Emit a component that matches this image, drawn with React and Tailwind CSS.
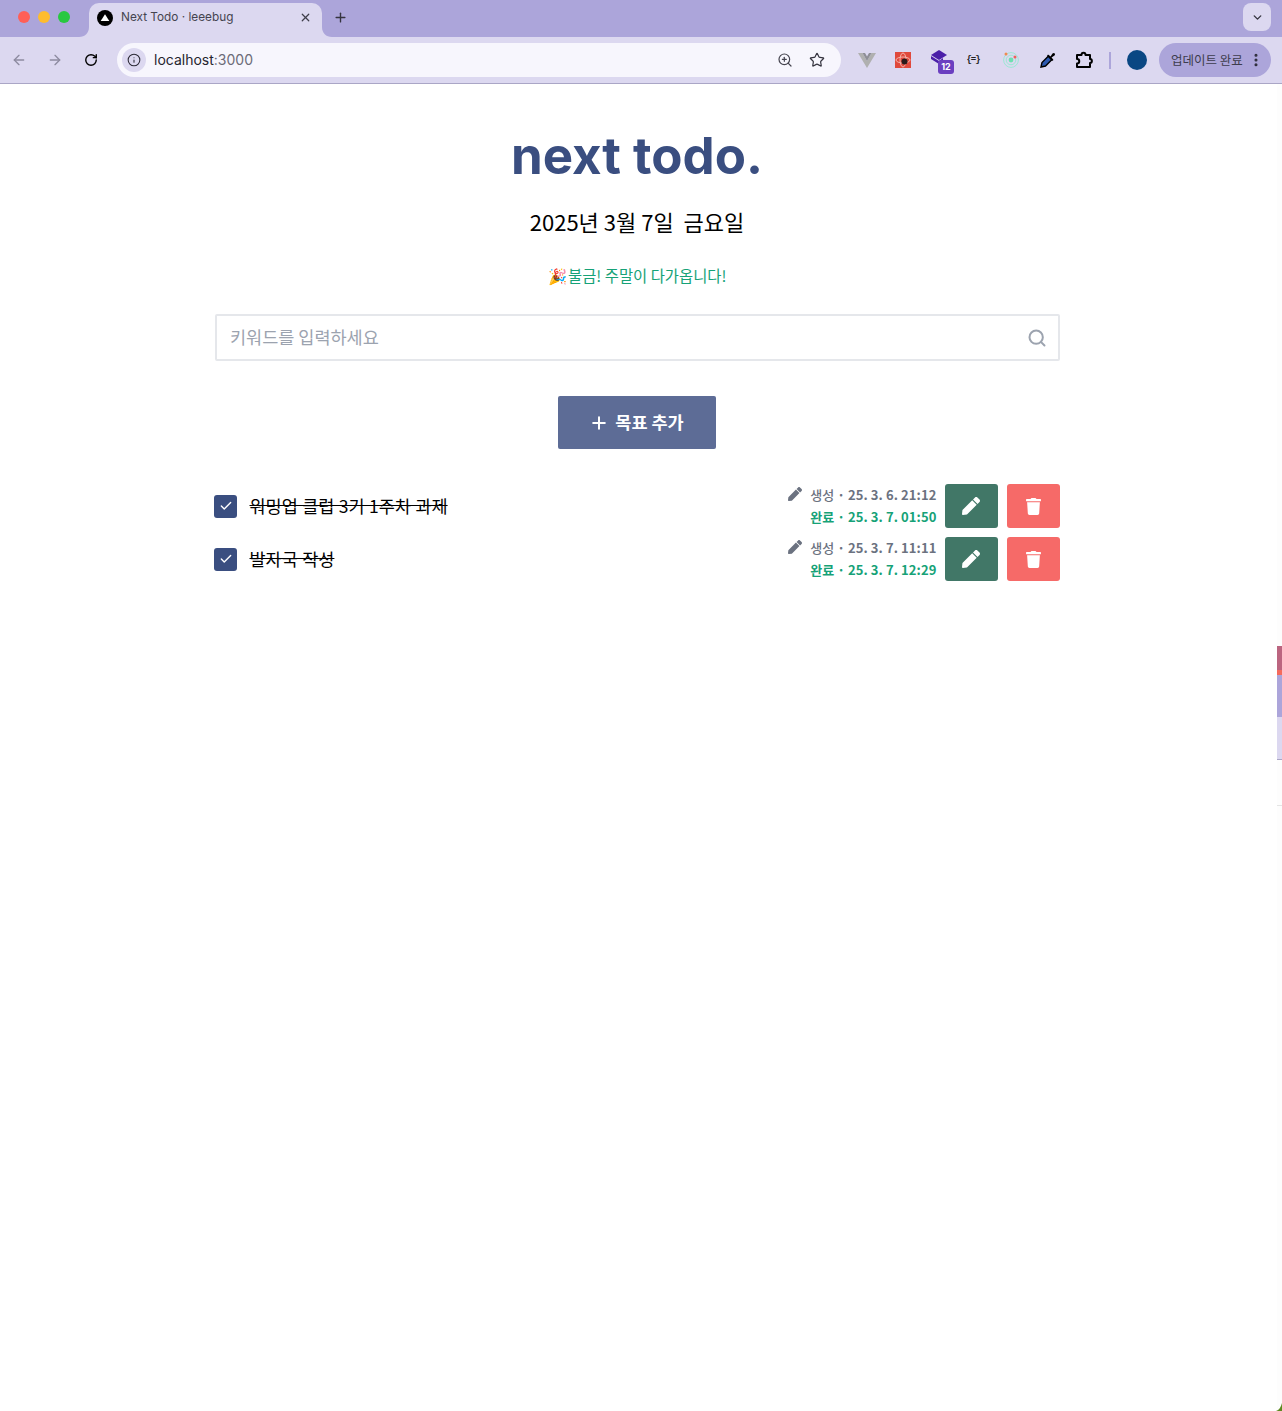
import React from "react";
import { FaPen, FaTrash } from "react-icons/fa";
import { Search, Plus, ArrowLeft, ArrowRight, RotateCw, Info, ZoomIn, Star, X, ChevronDown, Check, EllipsisVertical } from "lucide-react";

const KR = "font-['Noto_Sans_CJK_KR','Noto_Sans',sans-serif]";

function Tab() {
  return (
    <div className="relative ml-[19px] flex h-[34px] w-[233px] items-center rounded-t-[10px] bg-[#dcd8f0] pb-[5px] pl-[8px] pr-[10px]">
      <svg className="absolute bottom-0 left-[-10px]" width="10" height="10" viewBox="0 0 10 10"><path d="M10 0V10H0C6 10 10 6 10 0Z" fill="#dcd8f0" /></svg>
      <svg className="absolute bottom-0 right-[-10px]" width="10" height="10" viewBox="0 0 10 10"><path d="M0 0V10H10C4 10 0 6 0 0Z" fill="#dcd8f0" /></svg>
      <svg width="16" height="16" viewBox="0 0 16 16" className="shrink-0"><circle cx="8" cy="8" r="8" fill="#000" /><path d="M8 4.2L12.3 11H3.7Z" fill="#fff" /></svg>
      <span className="ml-[8px] flex-1 font-['Inter',sans-serif] text-[11.8px] text-[#45444f]">Next Todo · leeebug</span>
      <X size={13} strokeWidth={2.2} className="text-[#3f3e4a]" />
    </div>
  );
}

function Extensions() {
  return (
    <div className="flex items-center">
      <svg width="18" height="16" viewBox="0 0 18 16" className="ml-[17px]"><path d="M0 1H4.5L9 9L13.5 1H18L9 16Z" fill="#b0b0b0" /><path d="M4.5 1H7L9 4.5L11 1H13.5L9 9Z" fill="#8e8e96" /></svg>
      <svg width="16" height="16" viewBox="0 0 16 16" className="ml-[19px]"><rect width="16" height="16" fill="#e0493c" /><ellipse cx="8" cy="8" rx="7" ry="3" fill="none" stroke="#f8c8c0" strokeWidth=".8" /><ellipse cx="8" cy="8" rx="3" ry="7" fill="none" stroke="#f8c8c0" strokeWidth=".8" /><circle cx="9.5" cy="9.5" r="3" fill="#2a1a1a" /></svg>
      <div className="relative ml-[20px] h-[22px] w-[22px]">
        <svg width="16" height="14" viewBox="0 0 16 14" className="absolute left-0 top-[1px]"><path d="M8 0L16 5L8 10L0 5Z" fill="#4a1fa8" /><path d="M0 6V9L8 14L12 11V8L8 11Z" fill="#4a1fa8" /></svg>
        <span className="absolute bottom-[-3px] right-[-1px] flex h-[14px] w-[16px] items-center justify-center rounded-[3px] bg-[#6b3fc0] font-['Inter',sans-serif] text-[9px] font-bold text-white">12</span>
      </div>
      <span className="ml-[12px] mt-[2px] w-[16px] text-center font-['Liberation_Mono',monospace] text-[9px] font-bold tracking-[-1px] text-[#222]">{"{=}"}</span>
      <svg width="16" height="16" viewBox="0 0 16 16" className="ml-[22px]"><circle cx="8" cy="8" r="7.4" fill="none" stroke="#9be8d4" /><circle cx="8" cy="8" r="4.8" fill="none" stroke="#9be8d4" /><circle cx="8" cy="8" r="2.4" fill="#6ee0b0" /><circle cx="3" cy="2" r="1.5" fill="#f08a50" /><circle cx="12" cy="5" r="1.5" fill="#f0605a" /></svg>
      <svg width="18" height="18" viewBox="0 0 18 18" className="ml-[20px]"><path d="M2 16L3 11.5L9.5 5L13 8.5L6.5 15Z" fill="#2d5ab0" stroke="#000" strokeWidth="1.4" /><path d="M9 3.5L11.5 5.5L13.5 2.5C15 1 17 3 15.5 4.5L12.5 6.5L14.5 9L13 10L8 5Z" fill="#000" /></svg>
      <svg width="18" height="18" viewBox="0 0 18 18" className="ml-[18px]" fill="none" stroke="#000" strokeWidth="2" strokeLinejoin="round"><path d="M2 4H6.5C6.5 1 10.5 1 10.5 4H15V8C17.5 8 17.5 12 15 12V16H2V12.5C5 12.5 5 8 2 8Z" /></svg>
      <div className="ml-[16px] h-[17px] w-[2px] bg-[#aca5da]" />
      <div className="ml-[16px] h-[20px] w-[20px] rounded-full bg-[#0a4783]" />
      <div className="ml-[12px] flex h-[34px] w-[112px] items-center rounded-full bg-[#aca5da] pl-[12px]">
        <span className={`${KR} text-[12.5px] text-[#3d3c4c]`}>업데이트 완료</span>
        <EllipsisVertical size={16} strokeWidth={2.6} className="ml-[5px] text-[#2f2e3c]" />
      </div>
    </div>
  );
}

function Chrome() {
  return (
    <header className="w-full">
      <div className="flex h-[37px] items-end bg-[#aca5da]">
        <div className="mb-[14px] ml-[18px] flex gap-[8px]">
          <span className="h-[12px] w-[12px] rounded-full bg-[#ff5f57]" />
          <span className="h-[12px] w-[12px] rounded-full bg-[#febc2e]" />
          <span className="h-[12px] w-[12px] rounded-full bg-[#28c840]" />
        </div>
        <Tab />
        <Plus size={15} strokeWidth={2.2} className="mb-[12px] ml-[11px] text-[#35343f]" />
        <div className="mb-[6px] ml-auto mr-[11px] flex h-[28px] w-[28px] items-center justify-center rounded-[8px] bg-[#dcd8f0]">
          <ChevronDown size={13} strokeWidth={2.6} className="text-[#35343f]" />
        </div>
      </div>
      <div className="flex h-[47px] items-start border-b border-[#aaa6c6] bg-[#dcd8f0] pt-[6px]">
        <div className="flex h-[34px] items-center pl-[11px]">
          <ArrowLeft size={16} strokeWidth={2} className="text-[#8d8ba0]" />
          <ArrowRight size={16} strokeWidth={2} className="ml-[20px] text-[#8d8ba0]" />
          <RotateCw size={14} strokeWidth={2.4} className="ml-[21px] text-black" />
        </div>
        <div className="ml-[19px] flex h-[34px] w-[724px] items-center rounded-full bg-[#f7f6fd] pb-[1px] pl-[5px] pr-[16px]">
          <span className="flex h-[24px] w-[24px] items-center justify-center rounded-full bg-[#dcd8f0]">
            <Info size={14} strokeWidth={1.8} className="text-[#2a2935]" />
          </span>
          <span className="ml-[8px] flex-1 font-['Inter',sans-serif] text-[14px] text-[#26252e]">localhost<span className="text-[#6c6b78]">:3000</span></span>
          <ZoomIn size={16} strokeWidth={1.8} className="text-[#45444f]" />
          <Star size={16} strokeWidth={1.8} className="ml-[16px] text-[#35343f]" />
        </div>
        <div className="flex h-[34px] items-center"><Extensions /></div>
      </div>
    </header>
  );
}

function TodoRow({ title, created, done }) {
  return (
    <li className="flex h-[44px] items-center">
      <span className="ml-[-0.5px] flex h-[23px] w-[23px] shrink-0 items-center justify-center rounded-[3px] bg-[#3a4e80]">
        <Check size={14} strokeWidth={2.4} className="text-white" />
      </span>
      <span className={`${KR} ml-[12.5px] flex-1 text-[17.5px] text-black line-through [word-spacing:0.5px]`}>{title}</span>
      <div className={`${KR} flex flex-col items-end text-[13px] font-bold leading-[22px]`}>
        <div className="flex items-center text-[#6b7280]">
          <FaPen size={14} className="mb-[2px] mr-[8px]" />
          <span className="font-medium">생성</span><span className="mx-[3px]">·</span><span className="tracking-[0.1px]">{created}</span>
        </div>
        <div className="flex items-center text-[#16a277]">
          <span>완료</span><span className="mx-[3px]">·</span><span className="tracking-[0.1px]">{done}</span>
        </div>
      </div>
      <button className="ml-[8px] flex h-[44px] w-[53px] items-center justify-center rounded-[3px] bg-[#417767] text-white"><FaPen size={18} /></button>
      <button className="ml-[9px] flex h-[44px] w-[53px] items-center justify-center rounded-[3px] bg-[#f66a68] text-white"><FaTrash size={17} /></button>
    </li>
  );
}

export default function App() {
  return (
    <div className="relative min-h-[1411px] w-full overflow-hidden bg-white">
      <Chrome />
      <main className={`${KR} ml-[214.5px] flex w-[845px] flex-col items-center`}>
        <h1 className="mt-[35px] font-['Inter',sans-serif] text-[51px] font-bold leading-[74px] text-[#3a4e80]">next todo.</h1>
        <p className="mt-[12px] text-[22px] leading-[32px] text-black">2025년 3월 7일 &nbsp;금요일</p>
        <p className="mt-[27px] mb-[1px] text-[15.4px] leading-[22px] text-[#16a277]"><span className="mr-[-2px]">🎉</span> 불금! 주말이 다가옵니다!</p>
        <div className="mt-[27px] flex h-[47px] w-full items-center rounded-[2px] border-2 border-[#e5e7eb] pl-[13.5px] pr-[11px]">
          <span className="flex-1 text-[17.5px] text-[#9ca3af]">키워드를 입력하세요</span>
          <Search size={20} strokeWidth={2.4} className="text-[#9ca3af]" />
        </div>
        <button className="mt-[35px] flex h-[53px] w-[158px] items-center justify-center rounded-[2px] bg-[#5d6c96] text-[17.5px] font-bold text-white">
          <Plus size={20} strokeWidth={2.4} className="mr-[6px]" /><span className="mr-[1px]">목표 추가</span>
        </button>
        <ul className="mt-[35px] flex w-full flex-col gap-[9px]">
          <TodoRow title="워밍업 클럽 3기 1주차 과제" created="25. 3. 6. 21:12" done="25. 3. 7. 01:50" />
          <TodoRow title="발자국 작성" created="25. 3. 7. 11:11" done="25. 3. 7. 12:29" />
        </ul>
      </main>
      <div className="absolute bottom-0 right-0 top-[84px] w-[5px] bg-[#fdfdfd]" />
      <div className="absolute right-0 top-[646px] flex w-[5px] flex-col">
        <div className="h-[24px] bg-[#bb6580]" />
        <div className="h-[5px] bg-[#f56a5c]" />
        <div className="h-[42px] bg-[#aca5da]" />
        <div className="h-[42px] bg-[#dcd8f0]" />
        <div className="h-[1px] bg-[#aaa6c6]" />
      </div>
      <div className="absolute right-0 top-[805px] h-[1px] w-[5px] bg-[#e5e5e5]" />
      <svg className="absolute bottom-0 right-0" width="6" height="8" viewBox="0 0 6 8"><path d="M6 0V8H0C3 7 5 4 6 0Z" fill="#5d8a20" /></svg>
    </div>
  );
}
